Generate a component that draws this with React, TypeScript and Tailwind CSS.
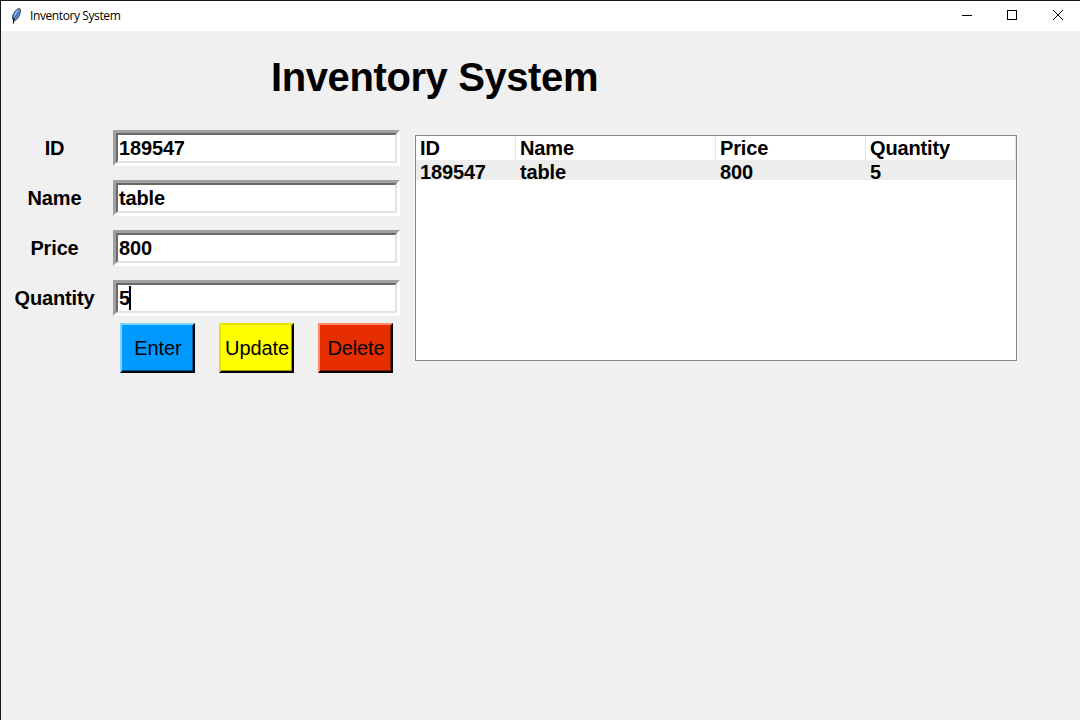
import React from "react";

const fields = [
  { label: "ID", value: "189547" },
  { label: "Name", value: "table" },
  { label: "Price", value: "800" },
  { label: "Quantity", value: "5", focused: true },
];

const buttons = [
  { label: "Enter", face: "bg-[#0099ff]", light: "border-t-[#7fd4ff] border-l-[#7fd4ff]", shade: "border-[#005c99]" },
  { label: "Update", face: "bg-[#ffff00]", light: "border-t-[#e5e500] border-l-[#e5e500]", shade: "border-[#999900]" },
  { label: "Delete", face: "bg-[#e62e00]", light: "border-t-[#ff8a70] border-l-[#ff8a70]", shade: "border-[#8a1c00]" },
];

const columns = [
  { title: "ID", value: "189547", width: "w-[100px]" },
  { title: "Name", value: "table", width: "w-[200px]" },
  { title: "Price", value: "800", width: "w-[150px]" },
  { title: "Quantity", value: "5", width: "w-[150px]" },
];

function Feather() {
  return (
    <svg width="12" height="18" viewBox="0 0 12 18" className="block">
      <path d="M9.5 1.5 L10.5 3 L10 6.5 L8.5 10 L6.5 12.5 L4 14 L2.5 11.5 L3 8 L5 4.5 L7 2.5 Z" fill="#6ea6e6" stroke="#26303c" strokeWidth="1" />
      <path d="M5.5 10.5 L8.5 4.5" stroke="#3a78c8" strokeWidth="2" />
      <path d="M7.5 3.5 L4.5 8" stroke="#b4cfea" strokeWidth="1" />
      <path d="M4.5 10.5 L3.5 13 L3.5 16.5" fill="none" stroke="#000" strokeWidth="1.2" />
    </svg>
  );
}

function TitleBar() {
  return (
    <header className="flex h-[30px] items-center bg-white pl-[9px]">
      <Feather />
      <span className="ml-2 grow whitespace-nowrap font-['Open_Sans','Noto_Sans',sans-serif] text-[12px] leading-[16px] tracking-[-0.4px]">
        Inventory System
      </span>
      <svg width="136" height="30" viewBox="0 0 136 30" fill="none" stroke="#000" strokeWidth="1" className="block">
        <path d="M18 14.5 H28" />
        <rect x="63.5" y="9.5" width="9" height="9" />
        <path d="M109 9 L119 19 M119 9 L109 19" />
      </svg>
    </header>
  );
}

export default function App() {
  return (
    <div className="h-[720px] w-[1080px] overflow-hidden border-t border-l border-[#17171a] bg-[#f0f0f0] font-['Liberation_Sans',Arial,sans-serif] text-[20px] leading-[24px] text-black">
      <TitleBar />
      <h1 className="ml-[270px] mt-[23px] h-[46px] whitespace-nowrap text-[40px] font-bold leading-[46px] tracking-[-0.4px]">
        Inventory System
      </h1>
      <main className="flex pt-[30px]">
        <section className="w-[399px]">
          <div className="flex flex-col gap-[14px] font-bold tracking-[-0.15px]">
            {fields.map((f) => (
              <div key={f.label} className="flex h-[36px] items-center">
                <label className="w-[112px] pr-[5px] text-center">{f.label}</label>
                <div className="h-[36px] w-[287px] border-[3px] border-t-[#a0a0a0] border-r-white border-b-white border-l-[#a0a0a0]">
                  <div className="flex h-[30px] items-center border-2 border-t-[#696969] border-r-[#e3e3e3] border-b-[#e3e3e3] border-l-[#696969] bg-white pl-px">
                    <span>{f.value}</span>
                    {f.focused && <i className="-ml-px h-[24px] w-[2px] bg-black" />}
                  </div>
                </div>
              </div>
            ))}
          </div>
          <div className="mt-[7px] flex gap-[24px] pl-[119px]">
            {buttons.map((b) => (
              <div key={b.label} className={`h-[50px] w-[75px] border-2 border-r-black border-b-black ${b.light}`}>
                <div className={`flex h-[46px] items-center justify-center border-r border-b pl-[2px] pt-px tracking-[-0.1px] ${b.face} ${b.shade}`}>
                  {b.label}
                </div>
              </div>
            ))}
          </div>
        </section>
        <section className="ml-[15px] mt-[5px] h-[226px] w-[602px] border border-[#828790] bg-white font-bold tracking-[-0.15px]">
          <div className="flex h-[24px]">
            {columns.map((c) => (
              <div key={c.title} className={`border-r border-[#e5e5e5] pl-1 ${c.width}`}>{c.title}</div>
            ))}
          </div>
          <div className="flex h-[20px] bg-[#ededed]">
            {columns.map((c) => (
              <div key={c.title} className={`pl-1 ${c.width}`}>{c.value}</div>
            ))}
          </div>
        </section>
      </main>
    </div>
  );
}
